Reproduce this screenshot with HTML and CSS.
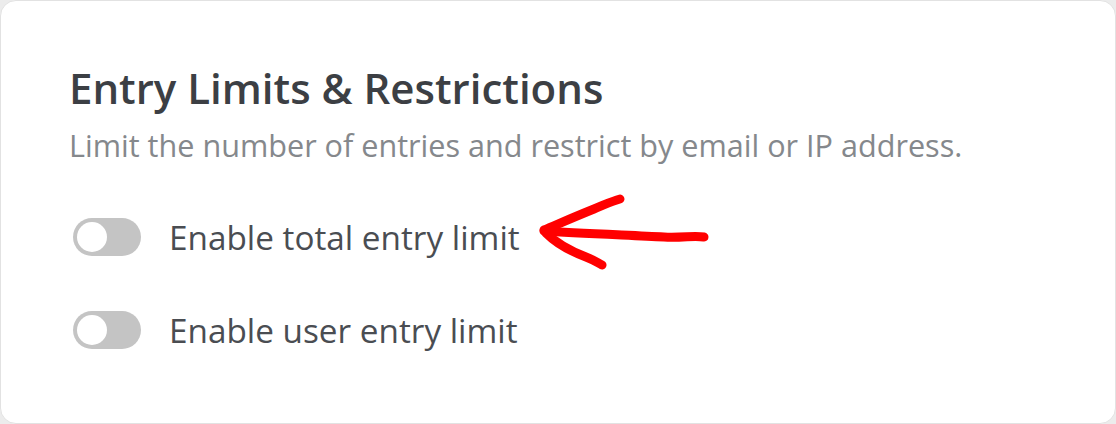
FILE: index.html
```html
<!DOCTYPE html>
<html lang="en">
<head>
    <meta charset="UTF-8">
    <meta name="viewport" content="width=device-width, initial-scale=1.0">
    <title>Entry Limits &amp; Restrictions</title>
    <link rel="stylesheet" href="styles.css">
</head>
<body>
    <div class="card">
        <h1>Entry Limits &amp; Restrictions</h1>
        <p class="subtitle">Limit the number of entries and restrict by email or IP address.</p>

        <div class="setting-list">
            <label class="setting-row">
                <span class="toggle"><span class="knob"></span></span>
                <span class="setting-label">Enable total entry limit</span>
                <svg class="arrow" width="180" height="84" viewBox="0 0 180 84" aria-hidden="true">
                    <path d="M10 40 C 40 42, 90 44, 130 46 C 150 47, 160 44, 170 46" />
                    <path d="M86 8 C 78 10, 70 14, 60 18 C 40 26, 22 34, 10 39" />
                    <path d="M12 42 C 22 52, 36 60, 52 66 C 60 69, 64 72, 68 74" />
                </svg>
            </label>
            <label class="setting-row">
                <span class="toggle"><span class="knob"></span></span>
                <span class="setting-label">Enable user entry limit</span>
            </label>
        </div>
    </div>
</body>
</html>
```

FILE: styles.css
```css
html, body {
    height: 100%;
}
body {
    margin: 0;
    background-color: #ececec;
    font-family: "Open Sans", "Noto Sans", Arial, sans-serif;
}
.card {
    box-sizing: border-box;
    height: 100%;
    background-color: #fff;
    border: 1px solid #e2e2e2;
    border-radius: 16px;
    padding: 59px 68px 0;
}
h1 {
    margin: 0;
    font-size: 42px;
    font-weight: 600;
    line-height: 56px;
    color: #3c3f44;
}
.subtitle {
    margin: 8px 0 0;
    font-size: 30.6px;
    line-height: 42px;
    color: #85888c;
}
.setting-list {
    margin-top: 52px;
    display: flex;
    flex-direction: column;
    gap: 55px;
}
.setting-row {
    display: flex;
    align-items: center;
    height: 38px;
}
.toggle {
    box-sizing: border-box;
    width: 68px;
    height: 38px;
    margin-left: 4px;
    padding: 4px;
    border-radius: 19px;
    background-color: #c4c4c4;
    display: flex;
    align-items: center;
}
.knob {
    width: 30px;
    height: 30px;
    border-radius: 50%;
    background-color: #fff;
}
.setting-label {
    margin-left: 28px;
    font-size: 33.3px;
    color: #4a4d52;
}
.arrow {
    margin: -42px 0 -34px 14px;
    flex-shrink: 0;
}
.arrow path {
    fill: none;
    stroke: #ff0000;
    stroke-width: 9;
    stroke-linecap: round;
    stroke-linejoin: round;
}
```
